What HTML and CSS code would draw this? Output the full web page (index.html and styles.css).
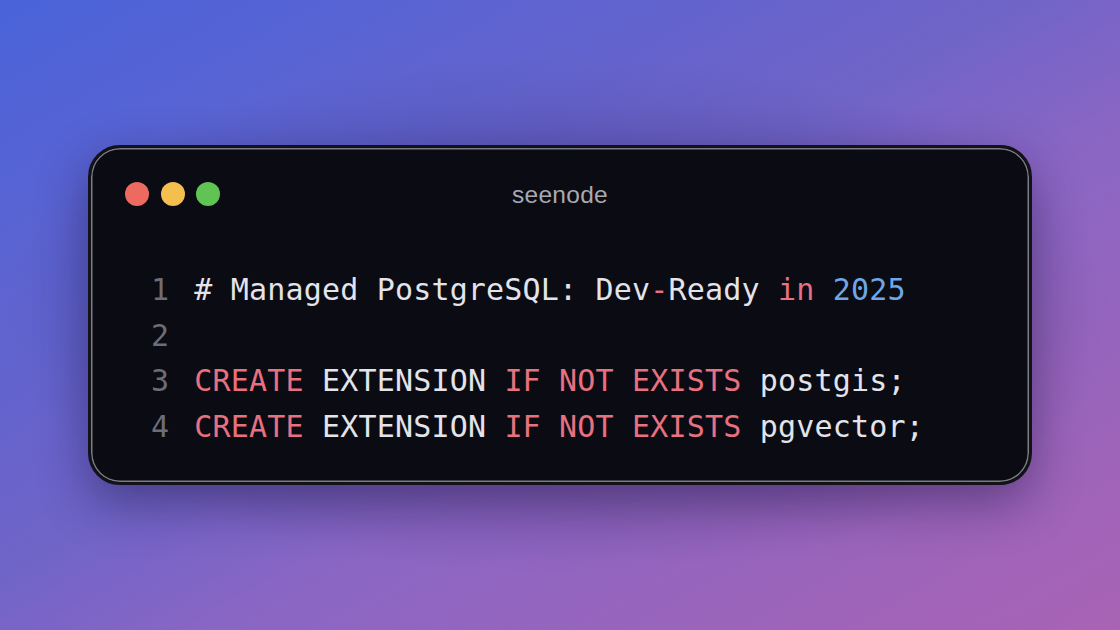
FILE: index.html
```html
<!DOCTYPE html>
<html lang="en">
<head>
<meta charset="utf-8">
<title>seenode</title>
<link rel="stylesheet" href="styles.css">
</head>
<body>
<main class="stage">
  <section class="window">
    <header class="titlebar">
      <div class="lights">
        <span class="light red"></span>
        <span class="light yellow"></span>
        <span class="light green"></span>
      </div>
      <div class="title">seenode</div>
      <div class="spacer"></div>
    </header>
    <div class="code">
      <span class="ln">1</span><span class="line"><span class="tx"># Managed PostgreSQL: Dev</span><span class="kw">-</span><span class="tx">Ready </span><span class="kw">in</span><span class="tx"> </span><span class="num">2025</span></span>
      <span class="ln">2</span><span class="line"></span>
      <span class="ln">3</span><span class="line"><span class="kw">CREATE</span><span class="tx"> EXTENSION </span><span class="kw">IF NOT EXISTS</span><span class="tx"> postgis;</span></span>
      <span class="ln">4</span><span class="line"><span class="kw">CREATE</span><span class="tx"> EXTENSION </span><span class="kw">IF NOT EXISTS</span><span class="tx"> pgvector;</span></span>
    </div>
  </section>
</main>
</body>
</html>
```
FILE: styles.css
```css
* { box-sizing: border-box; }
html, body { margin: 0; padding: 0; }
body {
  width: 1120px;
  height: 630px;
  overflow: hidden;
  background: linear-gradient(to bottom right, #4a63da 0%, #6f64c8 45%, #8a66c4 60%, #a963b4 100%);
}
.stage {
  width: 100%;
  height: 100%;
  display: flex;
  align-items: center;
  justify-content: center;
  background: radial-gradient(ellipse 560px 260px at 50% 50%, rgba(30, 20, 70, 0.35), rgba(30, 20, 70, 0) 100%);
}
.window {
  width: 944px;
  height: 340px;
  border-radius: 32px;
  background: #0b0b14;
  border: 3px solid #121218;
  box-shadow: inset 0 0 0 1.5px #7c7c84, 0 18px 50px rgba(25, 15, 60, 0.45);
  padding: 31px 34px 0 34px;
}
.titlebar {
  display: grid;
  grid-template-columns: 1fr auto 1fr;
  align-items: center;
  height: 24px;
}
.lights { display: flex; gap: 11.5px; }
.light { width: 24px; height: 24px; border-radius: 50%; display: block; }
.red { background: #ec6a5f; }
.yellow { background: #f4bf4f; }
.green { background: #5fc454; }
.title {
  font-family: "Liberation Sans", Arial, sans-serif;
  font-size: 24.5px;
  color: #a9a9b0;
  letter-spacing: 0.3px;
  padding-top: 2px;
}
.code {
  margin-top: 64px;
  padding-left: 26px;
  display: grid;
  grid-template-columns: auto 1fr;
  column-gap: 25px;
  font-family: "DejaVu Sans Mono", "Liberation Mono", monospace;
  font-size: 30px;
  letter-spacing: 0.18px;
  line-height: 45.7px;
  white-space: pre;
}
.ln { color: #6d6d77; text-align: right; }
.line { min-height: 45.7px; }
.tx { color: #e3e3ea; }
.kw { color: #e8707f; }
.num { color: #6fa7e6; }
```
